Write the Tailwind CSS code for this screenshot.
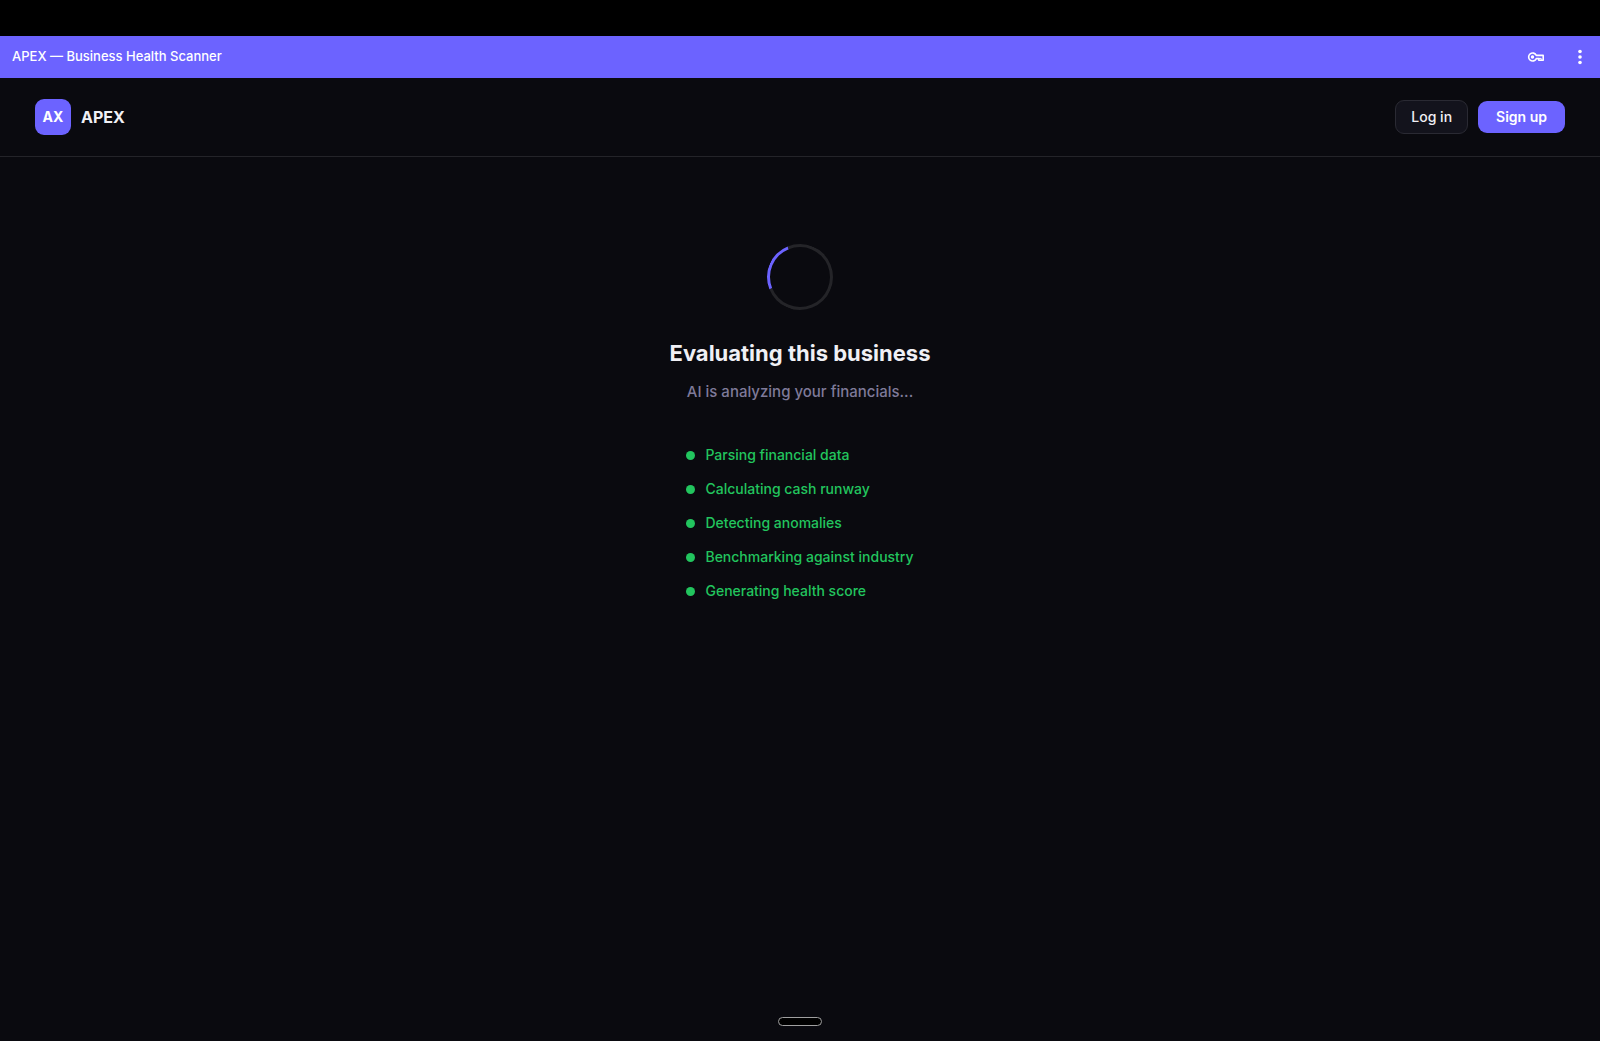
<!DOCTYPE html>
<html lang="en">
<head>
    <meta charset="UTF-8">
    <meta name="viewport" content="width=device-width, initial-scale=1.0">
    <title>APEX — Business Health Scanner</title>
    <script src="https://cdn.jsdelivr.net/npm/@tailwindcss/browser@4"></script>
</head>
<body class="bg-[#0a0a0f] font-['Inter',sans-serif] text-[#f0f0f5]">
    <div class="min-h-screen flex flex-col">
        <!-- Status bar -->
        <div class="h-9 bg-black"></div>

        <!-- App window bar -->
        <div class="h-[42px] bg-[#6c63ff] flex items-center justify-between pl-3 pr-[10px] text-white">
            <span class="text-[13px] font-medium">APEX — Business Health Scanner</span>
            <div class="flex items-center gap-6">
                <button type="button" aria-label="Passwords" class="w-5 h-5 flex items-center justify-center">
                    <svg class="w-[18px] h-[18px]" viewBox="0 0 18 18" fill="none" stroke="currentColor" stroke-width="1.6">
                        <path d="M9.3 7.4A4 4 0 1 0 9.3 10.6H11.8V12.2H16.2V7.4Z" stroke-linejoin="round"/>
                        <circle cx="5.5" cy="9" r="1.7" fill="currentColor" stroke="none"/>
                        <path d="M11.8 10.4H14.2V12" stroke-width="1"/>
                    </svg>
                </button>
                <button type="button" aria-label="Menu" class="w-5 h-5 flex items-center justify-center">
                    <svg class="w-4 h-4" viewBox="0 0 16 16" fill="currentColor">
                        <circle cx="8" cy="2.5" r="1.8"/>
                        <circle cx="8" cy="8" r="1.8"/>
                        <circle cx="8" cy="13.5" r="1.8"/>
                    </svg>
                </button>
            </div>
        </div>

        <!-- Header -->
        <header class="h-[79px] border-b border-[#242429] px-[35px] flex items-center justify-between">
            <a href="#" class="flex items-center gap-[10px]">
                <span class="w-9 h-9 rounded-[9px] bg-[#6c63ff] flex items-center justify-center text-sm font-bold text-white">AX</span>
                <span class="text-base font-bold">APEX</span>
            </a>
            <div class="flex items-center gap-[10px]">
                <button type="button" class="h-[34px] px-[15px] rounded-[9px] border border-[#2a2a33] bg-[#13131c] text-sm font-medium">Log in</button>
                <button type="button" class="h-8 px-[18px] rounded-[9px] bg-[#6c63ff] text-sm font-semibold text-white">Sign up</button>
            </div>
        </header>

        <!-- Loading state -->
        <main class="flex-1 flex flex-col items-center pt-[87px]">
            <div class="w-[66px] h-[66px] rounded-full border-3 border-[#242428] border-t-[#6c63ff] -rotate-[67deg]"></div>
            <h1 class="mt-[27px] text-[22px] leading-8 font-bold">Evaluating this business</h1>
            <p class="mt-[11px] text-[15px] leading-6 font-medium text-[#7f7a99]">AI is analyzing your financials...</p>
            <ul class="mt-10 flex flex-col gap-3 text-sm leading-[22px] font-medium text-[#22c55e]">
                <li class="flex items-center gap-[10px]"><span class="w-[9px] h-[9px] rounded-full bg-[#22c55e]"></span>Parsing financial data</li>
                <li class="flex items-center gap-[10px]"><span class="w-[9px] h-[9px] rounded-full bg-[#22c55e]"></span>Calculating cash runway</li>
                <li class="flex items-center gap-[10px]"><span class="w-[9px] h-[9px] rounded-full bg-[#22c55e]"></span>Detecting anomalies</li>
                <li class="flex items-center gap-[10px]"><span class="w-[9px] h-[9px] rounded-full bg-[#22c55e]"></span>Benchmarking against industry</li>
                <li class="flex items-center gap-[10px]"><span class="w-[9px] h-[9px] rounded-full bg-[#22c55e]"></span>Generating health score</li>
            </ul>
        </main>

        <!-- Gesture handle -->
        <footer class="flex justify-center pb-[15px]">
            <div class="w-11 h-[9px] rounded-full border border-[#a0a0a0] bg-black"></div>
        </footer>
    </div>
</body>
</html>
